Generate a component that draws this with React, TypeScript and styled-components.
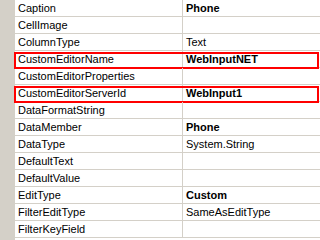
import React from 'react';
import styled, { createGlobalStyle } from 'styled-components';

const Global = createGlobalStyle`
  html, body {
    margin: 0;
    padding: 0;
    background: #fff;
    overflow: hidden;
  }
  body {
    font-family: Tahoma, "Liberation Sans", Arial, sans-serif;
    font-size: 11px;
    color: #000;
  }
`;

/* ------------ estilos ------------- */
const Grid = styled.div`
  width: 320px;
  height: 240px;
  display: flex;
  background: #fff;
  overflow: hidden;
`;

const Gutter = styled.div`
  width: 15px;
  flex-shrink: 0;
  background: #d4d0c8;
`;

const Rows = styled.div`
  flex: 1;
  display: flex;
  flex-direction: column;
`;

const Row = styled.div<{ marked?: boolean }>`
  position: relative;
  display: grid;
  grid-template-columns: 168px 1fr;
  height: 16px;
  border-bottom: 1px solid #d4d0c8;

  &::after {
    content: '';
    display: ${p => (p.marked ? 'block' : 'none')};
    position: absolute;
    top: 1px;
    bottom: -2px;
    left: -1px;
    right: 1px;
    border: 2px solid #f00;
    pointer-events: none;
  }
`;

const Name = styled.div`
  padding-left: 3px;
  line-height: 16px;
  white-space: nowrap;
  overflow: hidden;
  border-right: 1px solid #d4d0c8;
`;

const Value = styled.div<{ bold?: boolean }>`
  padding-left: 3px;
  line-height: 16px;
  white-space: nowrap;
  overflow: hidden;
  font-weight: ${p => (p.bold ? 700 : 400)};
`;

const props: { name: string; value?: string; bold?: boolean; marked?: boolean }[] = [
  { name: 'Caption', value: 'Phone', bold: true },
  { name: 'CellImage' },
  { name: 'ColumnType', value: 'Text' },
  { name: 'CustomEditorName', value: 'WebInputNET', bold: true, marked: true },
  { name: 'CustomEditorProperties' },
  { name: 'CustomEditorServerId', value: 'WebInput1', bold: true, marked: true },
  { name: 'DataFormatString' },
  { name: 'DataMember', value: 'Phone', bold: true },
  { name: 'DataType', value: 'System.String' },
  { name: 'DefaultText' },
  { name: 'DefaultValue' },
  { name: 'EditType', value: 'Custom', bold: true },
  { name: 'FilterEditType', value: 'SameAsEditType' },
  { name: 'FilterKeyField' },
];

/* ------------ componente ------------- */
const App: React.FC = () => (
  <>
    <Global />
    <Grid>
      <Gutter />
      <Rows>
        {props.map(p => (
          <Row key={p.name} marked={p.marked}>
            <Name>{p.name}</Name>
            <Value bold={p.bold}>{p.value}</Value>
          </Row>
        ))}
      </Rows>
    </Grid>
  </>
);

export default App;
